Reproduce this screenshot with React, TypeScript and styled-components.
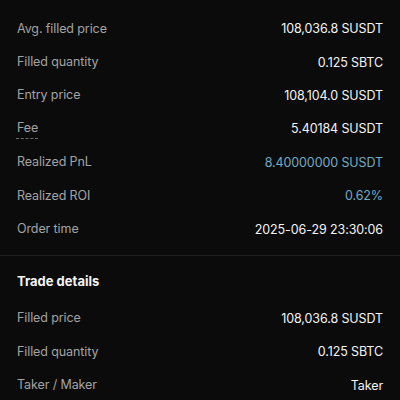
import React from 'react'
import styled, {createGlobalStyle} from 'styled-components'

const GlobalStyle = createGlobalStyle`
  html, body {
    margin: 0;
    padding: 0;
    background: #0b0b0b;
  }
  body {
    font-family: Inter, 'Noto Sans', sans-serif;
    -webkit-font-smoothing: antialiased;
  }
`

const Page = styled.div`
  width: 400px;
  height: 400px;
  overflow: hidden;
  background: #0b0b0b;
  color: #f2f2f2;
`

const Section = styled.section<{top?: number}>`
  padding: ${({top = 12}) => top}px 17px 9px 16px;
`

const Divider = styled.div`
  height: 1px;
  background: #1f1f1f;
`

const Heading = styled.h2`
  margin: 0;
  padding: 16px 0 12px 1px;
  line-height: 18px;
  font-size: 13px;
  font-weight: 700;
  color: #f4f4f4;
`

const Row = styled.div`
  display: flex;
  align-items: center;
  justify-content: space-between;
  height: 33.4px;
  font-size: 12.5px;
  letter-spacing: -0.1px;
`

const Label = styled.span<{dotted?: boolean}>`
  color: #a3a3a3;
  padding-left: 1px;
  padding-bottom: ${({dotted}) => (dotted ? '1px' : '0')};
  border-bottom: ${({dotted}) => (dotted ? '1px dashed #6a6a6a' : 'none')};
  line-height: 18px;
`

const Value = styled.span<{accent?: boolean}>`
  color: ${({accent}) => (accent ? '#72abc4' : '#f4f4f4')};
`

type Item = {label: string; value: string; accent?: boolean; dotted?: boolean}

const orderItems: Item[] = [
  {label: 'Avg. filled price', value: '108,036.8 SUSDT'},
  {label: 'Filled quantity', value: '0.125 SBTC'},
  {label: 'Entry price', value: '108,104.0 SUSDT'},
  {label: 'Fee', value: '5.40184 SUSDT', dotted: true},
  {label: 'Realized PnL', value: '8.40000000 SUSDT', accent: true},
  {label: 'Realized ROI', value: '0.62%', accent: true},
  {label: 'Order time', value: '2025-06-29 23:30:06'},
]

const tradeItems: Item[] = [
  {label: 'Filled price', value: '108,036.8 SUSDT'},
  {label: 'Filled quantity', value: '0.125 SBTC'},
  {label: 'Taker / Maker', value: 'Taker'},
]

const Rows = ({items}: {items: Item[]}) => (
  <>
    {items.map((item) => (
      <Row key={item.label}>
        <Label dotted={item.dotted}>{item.label}</Label>
        <Value accent={item.accent}>{item.value}</Value>
      </Row>
    ))}
  </>
)

export default function App() {
  return (
    <Page>
      <GlobalStyle />
      <Section>
        <Rows items={orderItems} />
      </Section>
      <Divider />
      <Section top={0}>
        <Heading>Trade details</Heading>
        <Rows items={tradeItems} />
      </Section>
    </Page>
  )
}
